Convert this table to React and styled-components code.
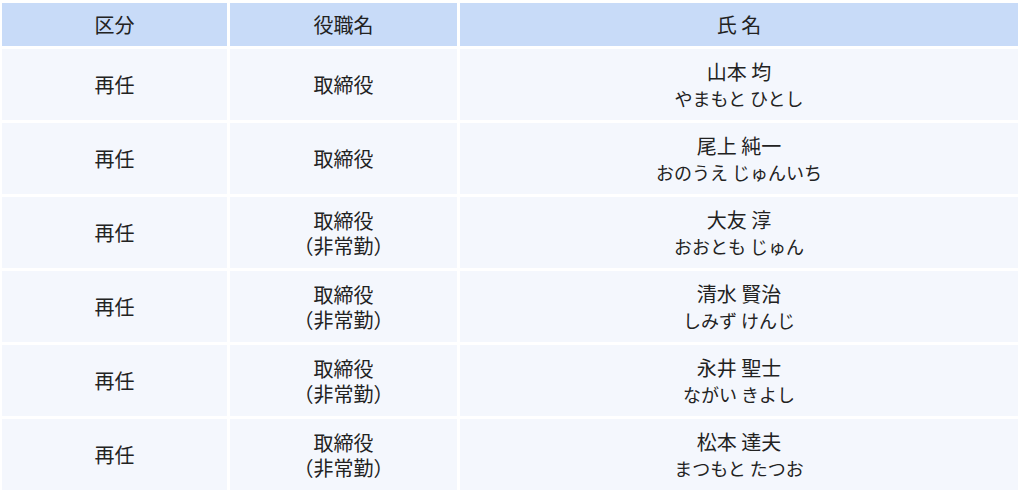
import React from "react";
import styled, { createGlobalStyle } from "styled-components";

const rows = [
  { kind: "再任", title: ["取締役"], name: "山本 均", kana: "やまもと ひとし" },
  { kind: "再任", title: ["取締役"], name: "尾上 純一", kana: "おのうえ じゅんいち" },
  { kind: "再任", title: ["取締役", "（非常勤）"], name: "大友 淳", kana: "おおとも じゅん" },
  { kind: "再任", title: ["取締役", "（非常勤）"], name: "清水 賢治", kana: "しみず けんじ" },
  { kind: "再任", title: ["取締役", "（非常勤）"], name: "永井 聖士", kana: "ながい きよし" },
  { kind: "再任", title: ["取締役", "（非常勤）"], name: "松本 達夫", kana: "まつもと たつお" },
];

function App() {
  return (
    <>
      <GlobalStyle />
      <Table>
        <colgroup>
          <col style={{ width: 225 }} />
          <col style={{ width: 227 }} />
          <col />
        </colgroup>
        <thead>
          <tr>
            <Th>区分</Th>
            <Th>役職名</Th>
            <Th>氏 名</Th>
          </tr>
        </thead>
        <tbody>
          {rows.map((r, i) => (
            <tr key={i}>
              <Td>{r.kind}</Td>
              <Td>
                {r.title.map((t, j) => (
                  <Line key={j}>{t}</Line>
                ))}
              </Td>
              <Td>
                <Name>{r.name}</Name>
                <Kana>{r.kana}</Kana>
              </Td>
            </tr>
          ))}
        </tbody>
      </Table>
    </>
  );
}

const GlobalStyle = createGlobalStyle`
  body {
    margin: 0;
    background: #ffffff;
    font-family: "Noto Sans CJK JP", "Noto Sans", sans-serif;
    color: #222;
  }
`;

const Table = styled.table`
  width: 1022px;
  margin: 0 0 0 -1px;
  border-collapse: separate;
  border-spacing: 3px;
  table-layout: fixed;
`;

const Th = styled.th`
  height: 43px;
  padding: 0;
  background: #c8dbf8;
  font-size: 20px;
  font-weight: 400;
  text-align: center;
  vertical-align: middle;
  color: #222;
`;

const Td = styled.td`
  height: 71px;
  padding: 0;
  background: #f4f7fd;
  font-size: 20px;
  text-align: center;
  vertical-align: middle;
  line-height: 25px;
  color: #222;
`;

const Line = styled.div`
  font-size: 20px;
  line-height: 25px;
`;

const Name = styled.div`
  font-size: 20px;
  line-height: 26px;
`;

const Kana = styled.div`
  font-size: 18px;
  line-height: 26px;
`;

export default App;
